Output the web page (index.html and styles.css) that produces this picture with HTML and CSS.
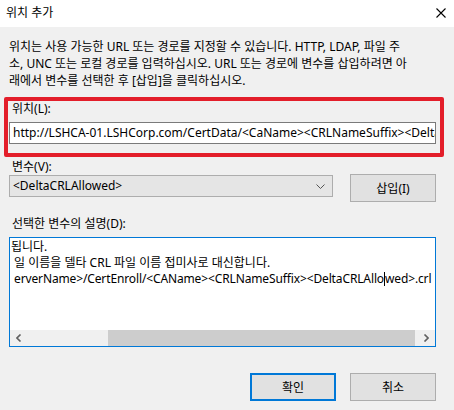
FILE: index.html
```html
<!DOCTYPE html>
<html lang="ko">
<head>
<meta charset="utf-8">
<title>위치 추가</title>
<link rel="stylesheet" href="styles.css">
</head>
<body>
<div class="dialog">
  <div class="titlebar">
    <span class="title">위치 추가</span>
    <svg class="close" width="10" height="10" viewBox="0 0 10 10"><path d="M0.5 0.5 L9.5 9.5 M9.5 0.5 L0.5 9.5" stroke="#000" stroke-width="1.1" fill="none"/></svg>
  </div>
  <div class="body">
    <p class="desc">위치는 사용 가능한 URL 또는 경로를 지정할 수 있습니다. HTTP, LDAP, 파일 주<br>소, UNC 또는 로컬 경로를 입력하십시오. URL 또는 경로에 변수를 삽입하려면 아<br>래에서 변수를 선택한 후 [삽입]을 클릭하십시오.</p>
    <div class="highlight">
      <div class="label">위치(L):</div>
      <div class="textbox"><span>http://LSHCA-01.LSHCorp.com/CertData/&lt;CaName&gt;&lt;CRLNameSuffix&gt;&lt;DeltaCRLAllowed&gt;.crl</span></div>
    </div>
    <div class="label var-label">변수(V):</div>
    <div class="var-row">
      <div class="select">
        <span>&lt;DeltaCRLAllowed&gt;</span>
        <svg class="chev" width="9" height="5" viewBox="0 0 9 5"><path d="M0.5 0.5 L4.5 4.5 L8.5 0.5" stroke="#555" stroke-width="1" fill="none"/></svg>
      </div>
      <button class="btn insert">삽입(I)</button>
    </div>
    <div class="label desc-label">선택한 변수의 설명(D):</div>
    <div class="textarea">
      <div class="ta-content">
        <div class="ta-line clip1">됩니다.</div>
        <div class="ta-line">일 이름을 델타 CRL 파일 이름 접미사로 대신합니다.</div>
        <div class="ta-line tight">erverName&gt;/CertEnroll/&lt;CAName&gt;&lt;CRLNameSuffix&gt;&lt;DeltaCRLAllo<span class="caret"></span>wed&gt;.crl</div>
      </div>
      <div class="hscroll">
        <svg class="arrow" width="6" height="8" viewBox="0 0 6 8"><path d="M4.5 0.5 L1 4 L4.5 7.5" stroke="#606060" stroke-width="1.6" fill="none"/></svg>
        <div class="track"><div class="thumb"></div></div>
        <svg class="arrow" width="6" height="8" viewBox="0 0 6 8"><path d="M1.5 0.5 L5 4 L1.5 7.5" stroke="#606060" stroke-width="1.6" fill="none"/></svg>
      </div>
    </div>
    <div class="actions">
      <button class="btn ok">확인</button>
      <button class="btn">취소</button>
    </div>
  </div>
</div>
</body>
</html>
```
FILE: styles.css
```css
* { box-sizing: border-box; }
html, body { margin: 0; padding: 0; }
body {
  width: 454px;
  height: 410px;
  background: #f0f0f0;
  font-family: "Noto Sans", "Noto Sans CJK KR", sans-serif;
  font-size: 12px;
  color: #000;
  overflow: hidden;
}
.dialog { width: 454px; height: 410px; display: flex; flex-direction: column; }
.titlebar {
  height: 27px;
  background: #fff;
  display: flex;
  align-items: center;
  justify-content: space-between;
  padding: 0 8px 1px 6px;
}
.title { font-size: 12px; line-height: 16px; }
.close { display: block; }
.body { padding: 11px 18px 0 9px; }
.desc {
  margin: 0;
  line-height: 17px;
  font-size: 12px;
  white-space: nowrap;
}
.highlight {
  margin: 8px -8px 0 -5px;
  border: 4px solid #e31e2a;
  border-radius: 2px;
  padding: 0 4px 9px 1px;
}
.label { line-height: 16px; padding-left: 3px; }
.textbox {
  margin-top: 5px;
  height: 22px;
  background: #fff;
  border: 1px solid #7a7a7a;
  padding: 0 3px;
  line-height: 20px;
  overflow: hidden;
  white-space: nowrap;
}
.var-label { margin-top: 2px; }
.var-row { display: flex; align-items: flex-start; gap: 17px; }
.select {
  width: 324px;
  height: 22px;
  background: #e5e5e5;
  border: 1px solid #adadad;
  display: flex;
  align-items: center;
  justify-content: space-between;
  padding: 0 7px 0 3px;
  line-height: 20px;
}
.chev { display: block; }
.btn {
  font-family: inherit;
  font-size: 12px;
  color: #000;
  width: 86px;
  height: 28px;
  background: #e1e1e1;
  border: 1px solid #adadad;
  padding: 0;
  margin: 0;
}
.insert { margin-top: -1px; height: 28px; }
.desc-label { margin-top: 14px; }
.textarea {
  margin-top: 5px;
  height: 110px;
  background: #fff;
  border: 1px solid #0078d7;
  display: flex;
  flex-direction: column;
}
.ta-content {
  flex: 1;
  overflow: hidden;
  padding: 1px 0 0 4px;
  white-space: nowrap;
}
.ta-line { line-height: 16px; }
.ta-line.tight { letter-spacing: -0.13px; }
.clip1 { margin-left: -3px; }
.caret {
  display: inline-block;
  width: 1px;
  height: 14px;
  background: #000;
  vertical-align: -3px;
}
.hscroll {
  height: 17px;
  background: #f0f0f0;
  border-top: 1px solid #fff;
  display: flex;
  align-items: center;
  padding: 0 6px;
}
.arrow { display: block; flex: none; }
.track { flex: 1; height: 100%; padding: 0 8px 0 86px; }
.thumb { height: 100%; background: #cdcdcd; }
.actions {
  display: flex;
  justify-content: flex-end;
  gap: 14px;
  margin-top: 26px;
}
.ok { border: 2px solid #0078d7; }
```
